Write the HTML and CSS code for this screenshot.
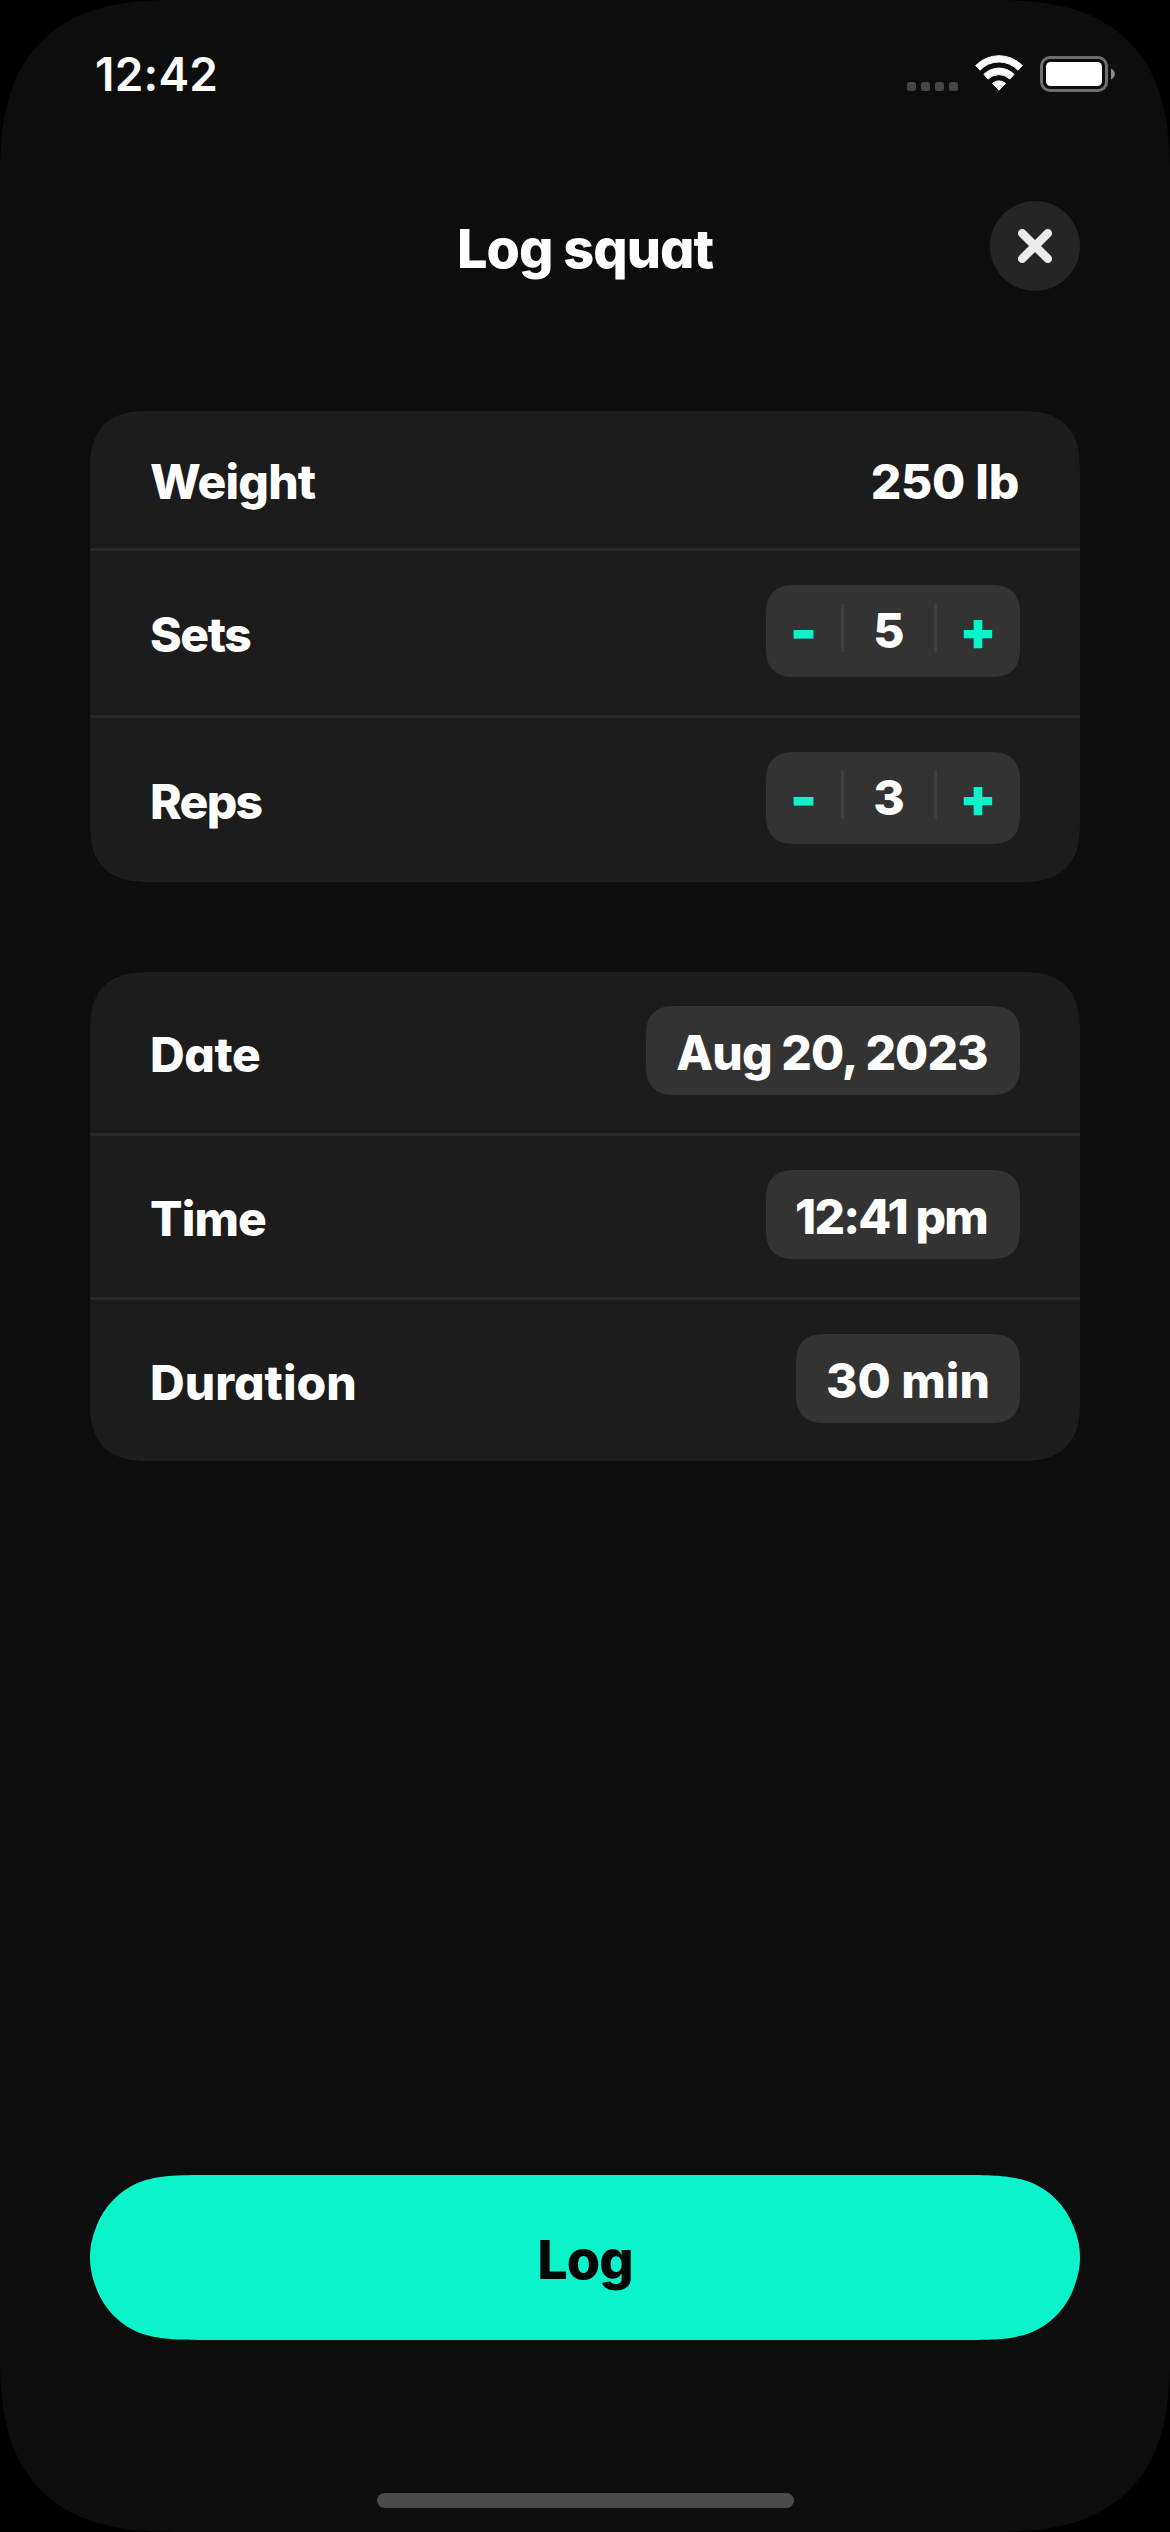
FILE: index.html
```html
<!DOCTYPE html>
<html lang="en">
<head>
<meta charset="utf-8">
<title>Log squat</title>
<link rel="stylesheet" href="styles.css">
</head>
<body>
<div class="screen">
  <div class="status-bar">
    <span class="clock">12:42</span>
    <div class="status-icons">
      <svg width="51" height="36" viewBox="0 0 51 36" fill="#464646">
        <rect x="0" y="26" width="9" height="9" rx="2.5"/>
        <rect x="14" y="26" width="9" height="9" rx="2.5"/>
        <rect x="28" y="26" width="9" height="9" rx="2.5"/>
        <rect x="42" y="26" width="9" height="9" rx="2.5"/>
      </svg>
      <svg class="wifi" width="48" height="36" viewBox="0 0 48 36" fill="#fff" stroke="#fff" stroke-width="1" stroke-linejoin="round">
        <path d="M.7 10.5A32.7 32.7 0 0 1 47.3 10.5L43 15.2A26 26 0 0 0 5 15.2Z"/>
        <path d="M8.900 19.3A21.5 21.5 0 0 1 39.100 19.3L34.8 24A15.5 15.5 0 0 0 13.2 24Z"/>
        <path d="M17.6 28.3A9.7 9.7 0 0 1 30.4 28.3L24 35.2Z"/>
      </svg>
      <svg width="75" height="36" viewBox="0 0 75 36">
        <rect x="1.5" y="1.5" width="65" height="33" rx="8.5" fill="none" stroke="#6f6f6f" stroke-width="3"/>
        <rect x="6" y="6" width="56" height="24" rx="4.5" fill="#fff"/>
        <path d="M71 12.5C76.2 15 76.2 21 71 23.5Z" fill="#8a8a8a"/>
      </svg>
    </div>
  </div>

  <header class="header">
    <h1 class="title">Log squat</h1>
    <button class="close" aria-label="Close">
      <svg width="36" height="36" viewBox="0 0 36 36" fill="none" stroke="#ebebeb" stroke-width="8.5" stroke-linecap="round">
        <path d="M5.2 5.2L30.8 30.8M30.8 5.2L5.2 30.8"/>
      </svg>
    </button>
  </header>

  <main class="groups">
    <section class="card">
      <div class="row row-plain">
        <span class="label">Weight</span>
        <span class="value">250 lb</span>
      </div>
      <div class="row row-stepper">
        <span class="label label-sets">Sets</span>
        <div class="stepper">
          <button class="step minus">-</button><i class="bar"></i>
          <span class="count">5</span><i class="bar"></i>
          <button class="step plus">+</button>
        </div>
      </div>
      <div class="row row-stepper">
        <span class="label label-reps">Reps</span>
        <div class="stepper">
          <button class="step minus">-</button><i class="bar"></i>
          <span class="count">3</span><i class="bar"></i>
          <button class="step plus">+</button>
        </div>
      </div>
    </section>

    <section class="card">
      <div class="row row-pill">
        <span class="label label-date">Date</span>
        <span class="pill pill-date">Aug 20, 2023</span>
      </div>
      <div class="row row-pill">
        <span class="label">Time</span>
        <span class="pill pill-time">12:41 pm</span>
      </div>
      <div class="row row-pill">
        <span class="label label-duration">Duration</span>
        <span class="pill pill-duration">30 min</span>
      </div>
    </section>
  </main>

  <footer class="footer">
    <button class="log">Log</button>
    <div class="home-indicator"></div>
  </footer>
</div>
</body>
</html>
```
FILE: styles.css
```css
* { box-sizing: border-box; }

body {
  margin: 0;
  background: #000;
  color: #fff;
  font-family: Inter, "Liberation Sans", sans-serif;
  font-feature-settings: "cv11";
  font-size: 48px;
  font-weight: 800;
  line-height: 60px;
  white-space: nowrap;
}

button {
  margin: 0;
  padding: 0;
  border: 0;
  background: none;
  color: inherit;
  font: inherit;
  font-feature-settings: inherit;
  letter-spacing: inherit;
}

svg { display: block; }

/* Continuous (iOS style) corners */
.screen, .card, .stepper, .pill { corner-shape: superellipse(1.38); }

.screen {
  width: 1170px;
  height: 2532px;
  display: flex;
  flex-direction: column;
  background: #0d0d0d;
  border-radius: 177px;
}

.status-bar {
  height: 148px;
  padding: 0 55px 0 95px;
  display: flex;
  align-items: center;
  justify-content: space-between;
}

.clock { font-size: 46px; font-weight: 600; letter-spacing: .2px; }

.status-icons { display: flex; gap: 17px; }
.wifi { margin-top: -1px; }

.header {
  margin: 53px 90px 120px;
  height: 90px;
  display: grid;
  grid-template-columns: 90px 1fr 90px;
  align-items: center;
}

.title {
  grid-column: 2;
  margin: 0;
  padding-top: 5px;
  font-size: 54px;
  font-weight: 800;
  line-height: 66px;
  letter-spacing: -1px;
  text-align: center;
}

.close {
  width: 90px;
  height: 90px;
  display: grid;
  place-items: center;
  border-radius: 50%;
  background: #252525;
}

.groups {
  flex: 1;
  padding: 0 90px;
  display: flex;
  flex-direction: column;
  gap: 90px;
}

.card {
  overflow: hidden;
  background: #1c1c1c;
  border-radius: 60px;
}

.row {
  padding: 0 60px;
  display: flex;
  align-items: center;
  justify-content: space-between;
  box-sizing: content-box;
}
.row + .row { border-top: 3px solid #2a2a2a; }
.row-plain { height: 137px; }
.row-stepper { height: 164px; }
.row-pill { height: 161px; }

.label, .value { padding-top: 4px; }
.label { letter-spacing: -.85px; }
.value { margin-right: 1px; letter-spacing: -.25px; }
.label-sets { letter-spacing: -1.4px; }
.label-reps { letter-spacing: -1.7px; }
.label-date { letter-spacing: -.35px; }
.label-duration { letter-spacing: 0; }

.stepper, .pill {
  margin-bottom: 4px;
  background: #333;
  border-radius: 30px;
}

.stepper {
  width: 254px;
  height: 92px;
  display: grid;
  grid-template-columns: 75px 3px 90px 3px 83px;
  align-items: center;
  text-align: center;
}
.bar {
  align-self: start;
  height: 48px;
  margin-top: 19px;
  background: #404040;
}
.step { color: #0af3cb; }
.minus { font-size: 58px; font-weight: 900; padding-bottom: 2px; }
.plus { font-size: 54px; font-weight: 900; padding: 0 1px 1px 0; }

.pill {
  height: 89px;
  padding-top: 4px;
  display: grid;
  place-content: center;
}
.pill-date { width: 374px; padding-right: 2px; letter-spacing: -.9px; }
.pill-time { width: 254px; padding-right: 4px; letter-spacing: -1.8px; }
.pill-duration { width: 224px; }

.footer {
  height: 357px;
  padding: 0 90px;
  display: flex;
  flex-direction: column;
  align-items: center;
}

.log {
  width: 990px;
  height: 165px;
  padding-top: 4px;
  background: #0af3cb;
  color: #050505;
  font-size: 54px;
  letter-spacing: -1px;
  /* capsule with eased shoulders */
  clip-path: path("M126 0H864C900.200 0 918.400 0 937.900 6.200C959.200 14 976 30.800 983.800 52.100C988 63 990 72 990 82.500C990 93 988 102 983.800 112.900C976 134.200 959.200 151 937.900 158.800C918.400 165 900.200 165 864 165H126C89.800 165 71.600 165 52.100 158.800C30.800 151 14 134.200 6.200 112.900C2 102 0 93 0 82.500C0 72 2 63 6.200 52.100C14 30.800 30.800 14 52.100 6.200C71.600 0 89.800 0 126 0Z");
}

.home-indicator {
  width: 417px;
  height: 15px;
  margin-top: 153px;
  border-radius: 8px;
  background: #4b4b4b;
}
```
